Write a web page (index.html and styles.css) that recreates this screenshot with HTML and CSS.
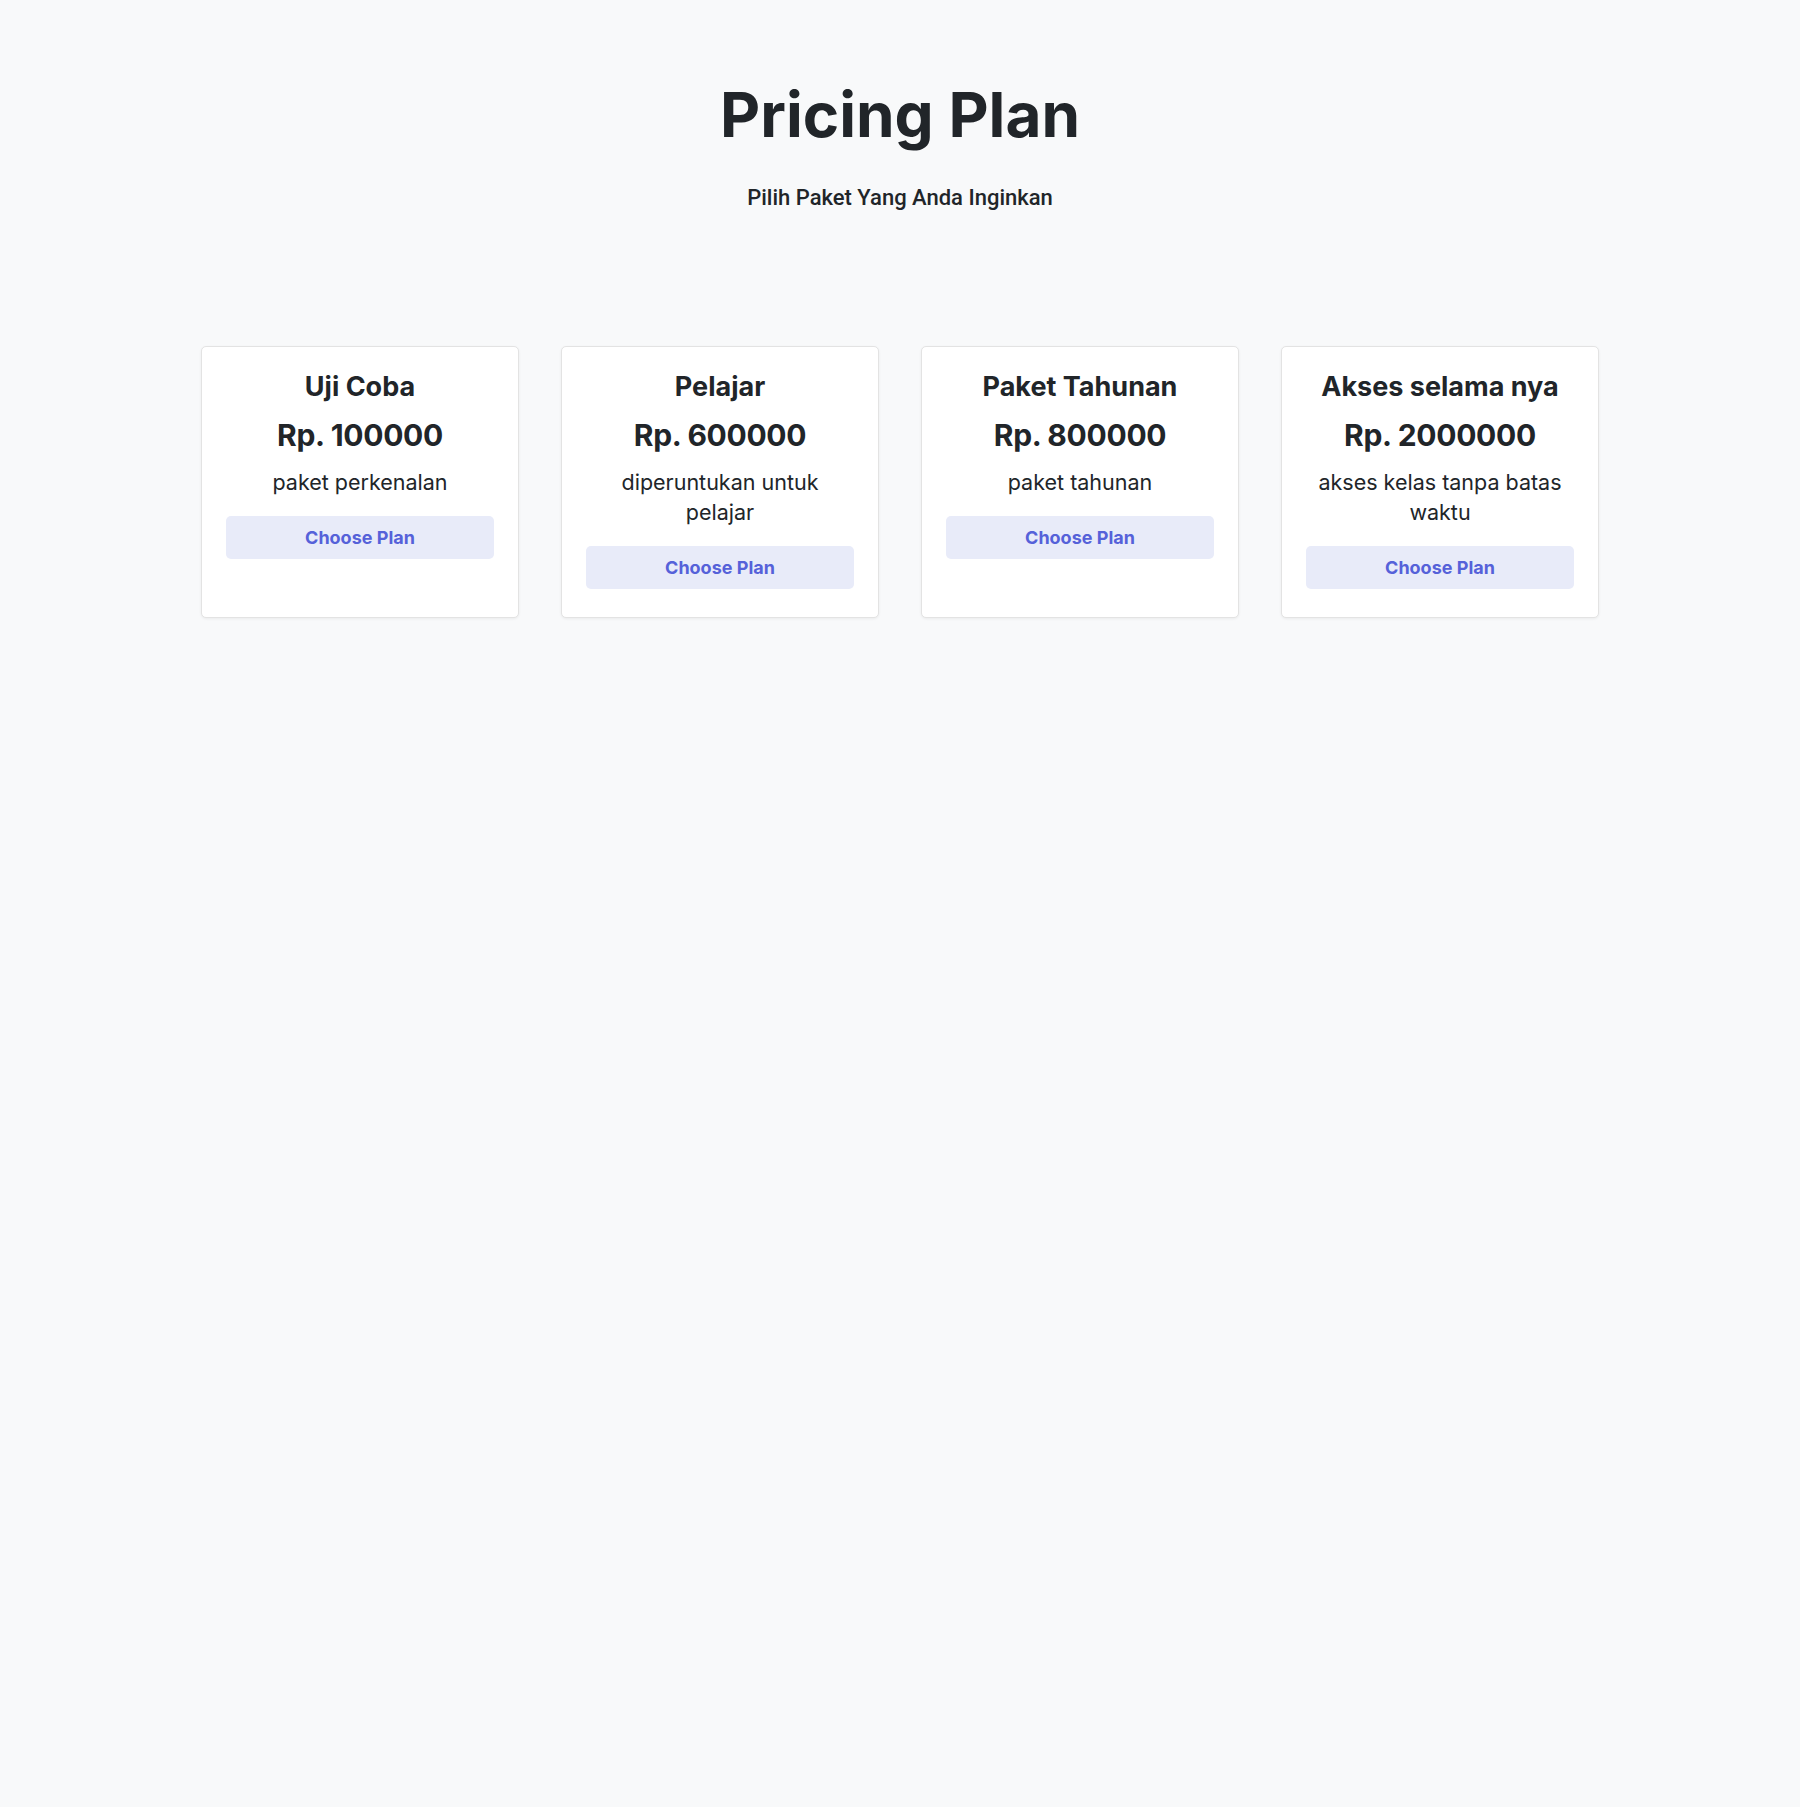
FILE: index.html
```html
<!DOCTYPE html>
<html lang="id">
<head>
<meta charset="utf-8">
<title>Pricing Plan</title>
<link rel="stylesheet" href="styles.css">
</head>
<body>
<header class="hero">
  <h1 class="hero-title">Pricing Plan</h1>
  <p class="hero-sub">Pilih Paket Yang Anda Inginkan</p>
</header>
<main class="plans">
  <div class="card">
    <h5 class="card-title">Uji Coba</h5>
    <h3 class="card-price">Rp. 100000</h3>
    <p class="card-desc">paket perkenalan</p>
    <a class="btn" href="#">Choose Plan</a>
  </div>
  <div class="card">
    <h5 class="card-title">Pelajar</h5>
    <h3 class="card-price">Rp. 600000</h3>
    <p class="card-desc">diperuntukan untuk pelajar</p>
    <a class="btn" href="#">Choose Plan</a>
  </div>
  <div class="card">
    <h5 class="card-title">Paket Tahunan</h5>
    <h3 class="card-price">Rp. 800000</h3>
    <p class="card-desc">paket tahunan</p>
    <a class="btn" href="#">Choose Plan</a>
  </div>
  <div class="card">
    <h5 class="card-title">Akses selama nya</h5>
    <h3 class="card-price">Rp. 2000000</h3>
    <p class="card-desc">akses kelas tanpa batas waktu</p>
    <a class="btn" href="#">Choose Plan</a>
  </div>
</main>
</body>
</html>
```
FILE: styles.css
```css
* { box-sizing: border-box; }
html, body { margin: 0; padding: 0; }
body {
  background: #f8f9fa;
  color: #212529;
  font-family: "Inter", "Open Sans", sans-serif;
  min-height: 1807px;
}
.hero {
  text-align: center;
  padding-top: 78px;
}
.hero-title {
  margin: 0;
  font-size: 62px;
  line-height: 1.2;
  font-weight: 700;
  color: #212529;
}
.hero-sub {
  margin: 29px 0 0;
  font-family: Roboto, sans-serif;
  font-size: 22px;
  font-weight: 500;
  line-height: 1.5;
  color: #212529;
}
.plans {
  display: grid;
  grid-template-columns: repeat(4, 318px);
  gap: 42px;
  justify-content: center;
  margin-top: 132px;
}
.card {
  background: #fff;
  border: 1px solid #e3e3e3;
  border-radius: 5px;
  box-shadow: 0 1px 3px rgba(0,0,0,0.06);
  padding: 24px 24px 28px;
  text-align: center;
  display: flex;
  flex-direction: column;
}
.card-title {
  margin: 0;
  font-size: 27px;
  line-height: 1.2;
  font-weight: 700;
}
.card-price {
  margin: 13px 0 0;
  font-size: 30px;
  line-height: 1.25;
  font-weight: 700;
  letter-spacing: -0.3px;
}
.card-desc {
  margin: 13px 0 0;
  font-size: 21.5px;
  line-height: 30px;
  font-weight: 400;
}
.btn {
  display: block;
  margin-top: 19px;
  height: 43px;
  line-height: 43px;
  background: #e8ebf9;
  color: #5561d9;
  border-radius: 5px;
  font-size: 18px;
  font-weight: 700;
  text-decoration: none;
}
```
